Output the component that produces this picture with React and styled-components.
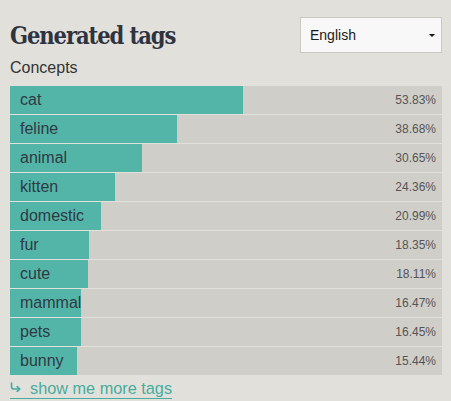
import React from "react";
import styled, { createGlobalStyle } from "styled-components";

const Global = createGlobalStyle`
  html, body { margin: 0; padding: 0; background: #e2e0db; }
  body { font-family: "Liberation Sans", Arial, sans-serif; }
`;

const Page = styled.div`
  padding: 17px 9px 0 10px;
  background: #e2e0db;
  min-height: 401px;
  box-sizing: border-box;
`;

const Header = styled.div`
  display: flex;
  justify-content: space-between;
  align-items: center;
  height: 36px;
`;

const Title = styled.h1`
  margin: 0;
  font-family: "DejaVu Serif", Georgia, serif;
  font-stretch: condensed;
  font-weight: 700;
  font-size: 23.5px;
  line-height: 36px;
  color: #2f3340;
  letter-spacing: -1.1px;
  padding-top: 2px;
`;

const Select = styled.div`
  position: relative;
  width: 142px;
  height: 36px;
  box-sizing: border-box;
  border: 1px solid #c9c8c4;
  background: #f8f8f8;
  display: flex;
  align-items: center;
  padding-left: 9px;
  font-size: 14px;
  color: #1a1a1a;
`;

const Caret = styled.span`
  position: absolute;
  right: 6px;
  top: 16px;
  width: 0;
  height: 0;
  border-left: 3px solid transparent;
  border-right: 3px solid transparent;
  border-top: 3px solid #111;
`;

const Subtitle = styled.div`
  font-size: 16px;
  line-height: 20px;
  color: #333;
  margin: 5px 0 8px;
`;

const List = styled.div`
  display: flex;
  flex-direction: column;
  gap: 1px;
`;

const Row = styled.div`
  position: relative;
  height: 28px;
  background: #d0cec9;
  display: flex;
  align-items: center;
  justify-content: space-between;
`;

const Fill = styled.div`
  position: absolute;
  left: 0;
  top: 0;
  bottom: 0;
  background: #53b5a8;
`;

const Label = styled.span`
  position: relative;
  padding-left: 10px;
  font-size: 16px;
  color: #2f3a44;
`;

const Pct = styled.span`
  position: relative;
  padding-right: 6px;
  font-size: 12px;
  color: #555;
`;

const More = styled.a`
  display: inline-flex;
  align-items: center;
  margin-top: 3px;
  height: 20px;
  font-size: 16.3px;
  line-height: 20px;
  color: #46ad9f;
  border-bottom: 1px solid #46ad9f;
  text-decoration: none;
  cursor: pointer;
`;

const Hook = styled.svg`
  width: 11px;
  height: 10px;
  margin: -3px 9px 0 0;
  flex-shrink: 0;
`;

const tags = [
  ["cat", 53.83],
  ["feline", 38.68],
  ["animal", 30.65],
  ["kitten", 24.36],
  ["domestic", 20.99],
  ["fur", 18.35],
  ["cute", 18.11],
  ["mammal", 16.47],
  ["pets", 16.45],
  ["bunny", 15.44],
];

export default function App() {
  return (
    <Page>
      <Global />
      <Header>
        <Title>Generated tags</Title>
        <Select>
          English
          <Caret />
        </Select>
      </Header>
      <Subtitle>Concepts</Subtitle>
      <List>
        {tags.map(([name, v]) => (
          <Row key={name}>
            <Fill style={{ width: `${v}%` }} />
            <Label>{name}</Label>
            <Pct>{v.toFixed(2)}%</Pct>
          </Row>
        ))}
      </List>
      <More>
        <Hook viewBox="0 0 11 10" fill="none" stroke="#46ad9f" strokeWidth="1.7" strokeLinecap="round" strokeLinejoin="round">
          <path d="M1.5 1 V4.5 Q1.5 7 4 7 H9.5" />
          <path d="M7.2 4.6 L9.7 7 L7.2 9.4" />
        </Hook>
        <span>show me more tags</span>
      </More>
    </Page>
  );
}
